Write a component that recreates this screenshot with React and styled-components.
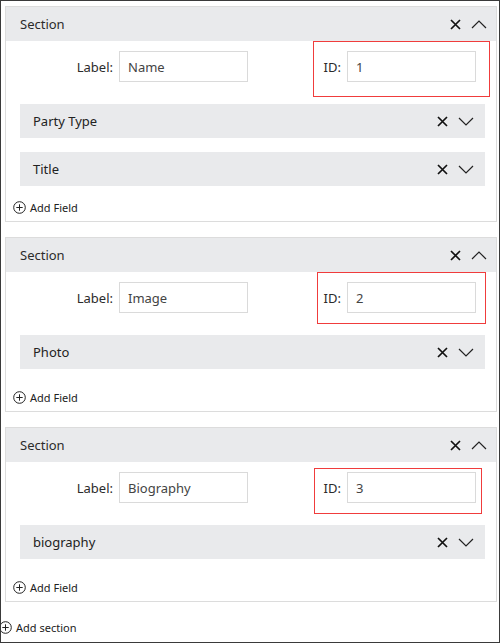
import React from "react";
import styled, { createGlobalStyle } from "styled-components";

const GlobalStyle = createGlobalStyle`
  html, body { margin: 0; padding: 0; background: #fff; }
  body { font-family: "Noto Sans", "Open Sans", sans-serif; color: #333; }
  * { box-sizing: border-box; }
`;

const Frame = styled.div`
  width: 500px;
  height: 643px;
  border: 1px solid #3a3a3a;
  padding: 5px 2px 0 4px;
  overflow: hidden;
  display: flex;
  flex-direction: column;
  gap: 15px;
`;

const SectionBox = styled.section`
  border: 1px solid #dcdcdc;
  background: #fff;
  padding-bottom: 7px;
`;

const Header = styled.div`
  height: 34px;
  background: #e9eaec;
  display: flex;
  align-items: center;
  padding: 0 9px 0 14px;
  font-size: 13px;
  color: #2b2b2b;
`;

const Title = styled.span`
  flex: 1;
`;

const Icons = styled.div`
  display: flex;
  align-items: center;
  gap: 10px;
`;

const PropsRow = styled.div`
  display: flex;
  align-items: center;
  gap: 33px;
  padding: 10px 0 0 47px;
`;

const Pair = styled.div`
  position: relative;
  display: flex;
  align-items: center;
  gap: 6px;
`;

const PairLabel = styled.label`
  width: 60px;
  text-align: right;
  font-size: 13px;
  color: #2b2b2b;
`;

const TextBox = styled.div`
  width: 129px;
  height: 31px;
  border: 1px solid #dadada;
  background: #fff;
  display: flex;
  align-items: center;
  padding-left: 8px;
  font-size: 13px;
  color: #444;
`;

const Highlight = styled.div`
  position: absolute;
  z-index: 2;
  left: ${(p) => p.$l}px;
  top: ${(p) => p.$t}px;
  right: ${(p) => p.$r}px;
  bottom: ${(p) => p.$b}px;
  box-shadow: inset 0 0 0 1px rgb(240, 60, 60);
  pointer-events: none;
`;

const FieldList = styled.div`
  display: flex;
  flex-direction: column;
  gap: 14px;
  padding: 22px 11px 0 14px;
`;

const FieldRow = styled.div`
  height: 34px;
  background: #e9eaec;
  display: flex;
  align-items: center;
  padding: 0 11px 0 13px;
  font-size: 13px;
  color: #222;
`;

const AddLink = styled.div`
  display: flex;
  align-items: center;
  gap: 4px;
  height: 14px;
  font-size: 11px;
  color: #222;
  margin-top: ${(p) => p.$gap}px;
  margin-left: ${(p) => p.$left}px;
`;

const CloseIcon = () => (
  <svg width="11" height="11" viewBox="0 0 11 11">
    <path d="M1 1 L10 10 M10 1 L1 10" stroke="#111" strokeWidth="1.7" fill="none" />
  </svg>
);

const Chevron = ({ up }) => (
  <svg width="16" height="9" viewBox="0 0 16 9">
    <path
      d={up ? "M1 8 L8 1 L15 8" : "M1 1 L8 8 L15 1"}
      stroke="#222"
      strokeWidth="1.2"
      fill="none"
    />
  </svg>
);

const PlusCircle = () => (
  <svg width="13" height="13" viewBox="0 0 13 13">
    <circle cx="6.5" cy="6.5" r="5.8" stroke="#222" strokeWidth="1" fill="none" />
    <path d="M6.5 3.3 V9.7 M3.3 6.5 H9.7" stroke="#222" strokeWidth="1" />
  </svg>
);

const sections = [
  {
    label: "Name",
    id: "1",
    fields: ["Party Type", "Title"],
    addGap: 14,
    box: { l: 32, t: -10, r: -14, b: -15 },
  },
  {
    label: "Image",
    id: "2",
    fields: ["Photo"],
    addGap: 21,
    box: { l: 36, t: -10, r: -10, b: -11 },
  },
  {
    label: "Biography",
    id: "3",
    fields: ["biography"],
    addGap: 21,
    box: { l: 33, t: -4, r: -6, b: -11 },
  },
];

function Section({ data }) {
  const { box } = data;
  return (
    <SectionBox>
      <Header>
        <Title>Section</Title>
        <Icons>
          <CloseIcon />
          <Chevron up />
        </Icons>
      </Header>
      <PropsRow>
        <Pair>
          <PairLabel>Label:</PairLabel>
          <TextBox>{data.label}</TextBox>
        </Pair>
        <Pair>
          <PairLabel>ID:</PairLabel>
          <TextBox>{data.id}</TextBox>
          <Highlight $l={box.l} $t={box.t} $r={box.r} $b={box.b} />
        </Pair>
      </PropsRow>
      <FieldList>
        {data.fields.map((f) => (
          <FieldRow key={f}>
            <Title>{f}</Title>
            <Icons>
              <CloseIcon />
              <Chevron />
            </Icons>
          </FieldRow>
        ))}
      </FieldList>
      <AddLink $gap={data.addGap} $left={7}>
        <PlusCircle />
        <span>Add Field</span>
      </AddLink>
    </SectionBox>
  );
}

export default function App() {
  return (
    <>
      <GlobalStyle />
      <Frame>
        {sections.map((s) => (
          <Section key={s.id} data={s} />
        ))}
        <AddLink $gap={3} $left={-6}>
          <PlusCircle />
          <span>Add section</span>
        </AddLink>
      </Frame>
    </>
  );
}
